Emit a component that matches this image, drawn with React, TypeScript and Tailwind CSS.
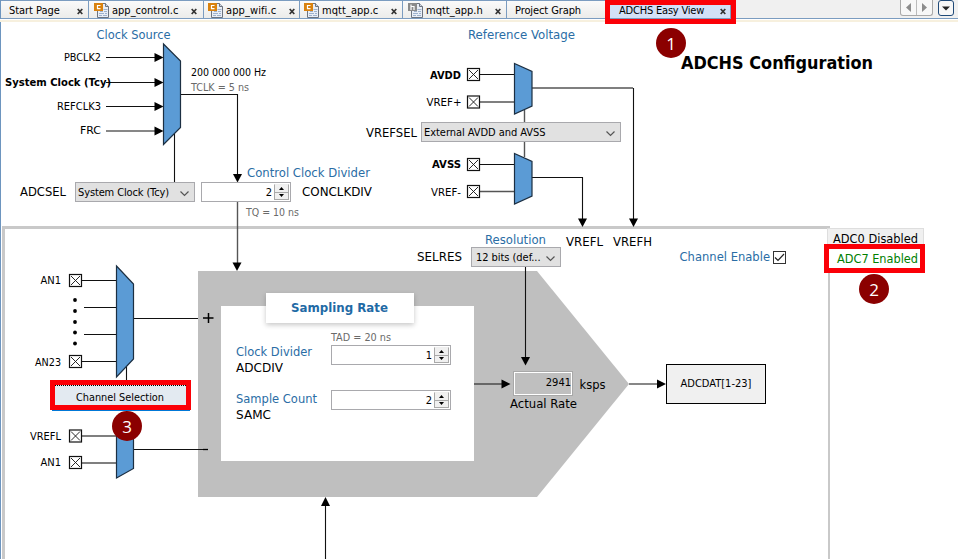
import React from "react";

interface LabelProps {
  x: number;
  y: number;
  w: number;
  children: string;
  tone?: string;
  size?: string;
}

const BLUE = "fill-[#2a6da5]";
const GREY = "fill-[#6a6a6a]";

/** Diagram caption: x is the left edge, y the baseline, w the run length. */
function Label({ x, y, w, children, tone = "fill-black", size = "text-[11px]" }: LabelProps) {
  return (
    <text x={x} y={y} textLength={w} lengthAdjust="spacingAndGlyphs" className={`${tone} ${size}`}>
      {children}
    </text>
  );
}

function Mux({ points }: { points: string }) {
  return <polygon points={points} fill="#5b9bd5" stroke="#1c2f42" strokeWidth="1.2" />;
}

/** Input pin: a crossed square. */
function Pin({ x, y }: { x: number; y: number }) {
  return (
    <g stroke="#111" fill="#fff">
      <rect x={x} y={y} width="12" height="12" strokeWidth="1.2" />
      <path d={`M${x + 1.5} ${y + 1.5}l9 9m0 -9l-9 9`} strokeWidth="0.9" />
    </g>
  );
}

type Dir = "right" | "down" | "up";

function Head({ x, y, dir }: { x: number; y: number; dir: Dir }) {
  const shape = {
    right: `M${x} ${y}l-9 -4.5v9z`,
    down: `M${x} ${y}l-4.5 -8.5h9z`,
    up: `M${x} ${y}l-4.5 9h9z`,
  }[dir];
  return <path d={shape} fill="#000" />;
}

function Wire({ d, soft = false }: { d: string; soft?: boolean }) {
  return <path d={d} fill="none" stroke={soft ? "#555" : "#111"} strokeWidth={soft ? 1.4 : 1.1} />;
}

function FileIcon({ kind }: { kind: "c" | "h" }) {
  const badge = kind === "c" ? "#d9820f" : "#8a8a8a";
  return (
    <svg width="16" height="16" viewBox="0 0 16 16" className="shrink-0">
      <path d="M3.5 1.5h8l3 3v11h-11z" fill="#e9eef6" stroke="#6c7480" />
      <path d="M11.5 1.5v3h3" fill="#cfd6e2" stroke="#6c7480" />
      <path d="M9.500 7.500h4M6 9.500h3m1 0h3M5 11.500h5m1 0h2M5 13.500h3m1 0h4" stroke="#9db1cc" />
      <rect x="0" y="1" width="9" height="8" fill={badge} />
      {kind === "c" ? (
        <path d="M6.500 3.500h-3v3.200h3" fill="none" stroke="#fff" strokeWidth="1.200" />
      ) : (
        <path d="M3 2.500v5.500M3 4.500h3v3.500" fill="none" stroke="#fff" strokeWidth="1.200" />
      )}
    </svg>
  );
}

function CloseMark() {
  return (
    <svg width="6" height="7" viewBox="0 0 6 7" className="mt-1 shrink-0">
      <path d="M0.700 1l4.600 5M5.300 1l-4.600 5" stroke="#333" strokeWidth="1.700" />
    </svg>
  );
}

interface TabProps {
  name: string;
  frame: string;
  text: string;
  icon?: "c" | "h";
  closable?: boolean;
  active?: boolean;
}

function Tab({ name, frame, text, icon, closable = true, active = false }: TabProps) {
  return (
    <div
      className={`flex h-[19px] shrink-0 items-center border-r border-t border-b border-[#7b9cc0] ${frame} ${
        active ? "bg-[#d3e0f7]" : "bg-gradient-to-b from-[#fafafa] to-[#ececea]"
      }`}
    >
      {icon && <FileIcon kind={icon} />}
      <span className={`mt-px whitespace-nowrap leading-none ${icon ? "ml-[2px]" : ""} ${text}`}>{name}</span>
      {closable && (
        <span className="ml-auto flex">
          <CloseMark />
        </span>
      )}
    </div>
  );
}

function TabBar() {
  return (
    <div className="flex h-[22px] items-start bg-[#f0f0f0] text-[11px]">
      <div className="flex h-[19px] min-w-0 flex-1 border-b border-[#7b9cc0] pl-px">
        <Tab name="Start Page" frame="w-[88px] pl-[8px] pr-[5px]" text="tracking-[-0.05px]" />
        <Tab name="app_control.c" frame="w-[115px] pl-[5px] pr-[6px]" text="tracking-[0px]" icon="c" />
        <Tab name="app_wifi.c" frame="w-[96px] pl-[4px] pr-[4px]" text="tracking-[0.1px]" icon="c" />
        <Tab name="mqtt_app.c" frame="w-[103px] pl-[4px] pr-[5px]" text="tracking-[0.05px]" icon="c" />
        <Tab name="mqtt_app.h" frame="w-[104px] pl-[5px] pr-[5px]" text="tracking-[0px]" icon="h" />
        <Tab name="Project Graph" frame="w-[103px] pl-[8px]" text="tracking-[-0.1px]" closable={false} />
        <Tab name="ADCHS Easy View" frame="w-[121px] pl-[9px] pr-[4px]" text="tracking-[-0.2px]" active />
        <div className="ml-auto flex h-4 gap-[5px] pr-[4px]">
          <div className="flex h-4 w-[33px] rounded-b-[3px] border border-t-0 border-[#a9a9a9] bg-[#f7f7f7]">
            <div className="flex flex-1 items-center justify-center border-r border-[#bbb]">
              <svg width="5" height="9" viewBox="0 0 5 9"><path d="M5 0v9L0 4.500z" fill="#8c8c8c" /></svg>
            </div>
            <div className="flex flex-1 items-center justify-center">
              <svg width="5" height="9" viewBox="0 0 5 9"><path d="M0 0v9l5-4.500z" fill="#8c8c8c" /></svg>
            </div>
          </div>
          <div className="flex h-4 w-4 items-center justify-center rounded-[3px] border border-[#204a78] bg-[#f7f7f7]">
            <svg width="8" height="5" viewBox="0 0 8 5"><path d="M0 0.500h8L4 4.500z" fill="#222" /></svg>
          </div>
        </div>
      </div>
    </div>
  );
}

function Select({ place, value, text }: { place: string; value: string; text: string }) {
  return (
    <div className={`absolute flex h-5 items-center justify-between border border-[#a9a9ad] bg-[#e1e1e1] pr-[5px] text-[11px] ${place}`}>
      <span className={`whitespace-nowrap leading-none ${text}`}>{value}</span>
      <svg width="9" height="6" viewBox="0 0 9 6" className="mt-[3px] shrink-0">
        <path d="M0.500 0.500l4 4 4-4" fill="none" stroke="#555" strokeWidth="1.200" />
      </svg>
    </div>
  );
}

function Spinner({ place, value }: { place: string; value: string }) {
  return (
    <div className={`absolute flex h-5 items-center justify-end border border-[#a9a9ad] bg-white pr-px text-[11px] ${place}`}>
      <span className="mr-[2px] leading-none">{value}</span>
      <div className="flex h-4 w-[15px] flex-col">
        <div className="flex flex-1 items-center justify-center border border-t-[#eee] border-[#a9a9a9] bg-[#f0f0f0]">
          <svg width="5" height="3" viewBox="0 0 5 3"><path d="M0 3h5L2.500 0z" /></svg>
        </div>
        <div className="flex flex-1 items-center justify-center border border-t-0 border-[#a9a9a9] bg-[#f0f0f0]">
          <svg width="5" height="3" viewBox="0 0 5 3"><path d="M0 0h5L2.500 3z" /></svg>
        </div>
      </div>
    </div>
  );
}

function Step({ place, n }: { place: string; n: string }) {
  return (
    <div className={`absolute flex h-[30px] w-[30px] items-center justify-center rounded-full bg-[#8b0000] font-['Open_Sans',sans-serif] text-[17px] leading-none text-white [font-stretch:normal] ${place}`}>
      {n}
    </div>
  );
}

function Schematic() {
  return (
    <svg width="958" height="559" viewBox="0 0 958 559" className="absolute left-0 top-0">
      {/* ADC core */}
      <polygon points="198,271 537,271 629,384 537,497 198,497" fill="#bfbfbf" />
      <rect x="221" y="306" width="253" height="155" fill="#fff" />

      {/* clock source */}
      {[57.5, 82.5, 106.5, 131].map((y) => (
        <g key={y}>
          <Wire d={`M106 ${y}H156`} />
          <Head x={163.5} y={y} dir="right" />
        </g>
      ))}
      <Wire d="M174.500 134V183" />
      <Mux points="163.5,44 180.5,61 180.5,127.5 163.5,144.5" />
      <Wire d="M181 94.500H237.500V176" />
      <Head x={237.5} y={182.5} dir="down" />
      <Wire d="M237.500 202V264" soft />
      <Head x={237} y={271} dir="down" />

      {/* reference voltage */}
      <Wire d="M480 74.500H514M480 164.500H514" />
      <Wire d="M480 102H514M480 191.500H514M524.500 110V157M532 88H633" soft />
      <Wire d="M633.500 88V220M532 177.500H582.500V220" />
      <Head x={582.5} y={227} dir="down" />
      <Head x={633.5} y={227} dir="down" />
      <Mux points="514.5,63.5 532,71.5 532,106 514.5,114" />
      <Mux points="514.5,153.500 532,161.500 532,196 514.5,204" />
      <Pin x={467.5} y={68.5} />
      <Pin x={467.5} y={96} />
      <Pin x={467.5} y={158.5} />
      <Pin x={467.5} y={185.5} />

      {/* positive and negative inputs */}
      <Wire d="M82 280.500H116M84 307.500H116M84 334.500H116M82 361.500H116M134 318.500H198M126.500 366V382M126.500 408V420M134 449.500H203" />
      <Wire d="M82 436H116M82 463H116" soft />
      <Mux points="116.5,266 133.5,284 133.5,359 116.5,377" />
      <Mux points="116.5,427 133.5,427 133.5,468.500 116.5,478" />
      <Pin x={69.5} y={274.5} />
      <Pin x={69.5} y={355.5} />
      <Pin x={69.5} y={430} />
      <Pin x={69.5} y={456.5} />
      {[300, 311, 322, 332.5, 343.5].map((y) => (
        <circle key={y} cx="75" cy={y} r="1.900" />
      ))}
      <path d="M203 318H213.500M208.500 313V323" stroke="#000" strokeWidth="1.500" />
      <path d="M203 449.500H208" stroke="#000" strokeWidth="1.300" />

      {/* core wiring */}
      <Wire d="M474 384H503M525.500 267V358M629 384H658M325.500 559V504" />
      <Head x={510.5} y={384} dir="right" />
      <Head x={525.5} y={365.5} dir="down" />
      <Head x={666} y={384} dir="right" />
      <Head x={325.5} y={497} dir="up" />

      <Label x={96.5} y={39} w={74} tone={BLUE} size="text-[12.5px]">Clock Source</Label>
      <Label x={64} y={61} w={37}>PBCLK2</Label>
      <Label x={5} y={86} w={106} size="text-[11px] font-bold">System Clock (Tcy)</Label>
      <Label x={57} y={110} w={44}>REFCLK3</Label>
      <Label x={80} y={134} w={21}>FRC</Label>
      <Label x={191} y={76} w={75}>200 000 000 Hz</Label>
      <Label x={191} y={91} w={58} tone={GREY}>TCLK = 5 ns</Label>
      <Label x={20} y={196} w={46} size="text-[12px]">ADCSEL</Label>
      <Label x={302} y={196} w={70} size="text-[12px]">CONCLKDIV</Label>
      <Label x={247} y={177} w={123} tone={BLUE} size="text-[12.5px]">Control Clock Divider</Label>
      <Label x={246} y={216} w={53} tone={GREY}>TQ = 10 ns</Label>

      <Label x={468} y={39} w={107} tone={BLUE} size="text-[12.5px]">Reference Voltage</Label>
      <Label x={430} y={79} w={31} size="text-[11px] font-bold">AVDD</Label>
      <Label x={426.5} y={106} w={35}>VREF+</Label>
      <Label x={366} y={137} w={51} size="text-[12px]">VREFSEL</Label>
      <Label x={432} y={168} w={29} size="text-[11px] font-bold">AVSS</Label>
      <Label x={431} y={196} w={30}>VREF-</Label>
      <Label x={681} y={69} w={192} size="text-[17px] font-bold">ADCHS Configuration</Label>

      <Label x={485} y={244} w={61} tone={BLUE} size="text-[12px]">Resolution</Label>
      <Label x={417} y={261} w={45} size="text-[12px]">SELRES</Label>
      <Label x={566} y={246} w={37} size="text-[12px]">VREFL</Label>
      <Label x={613} y={246} w={39} size="text-[12px]">VREFH</Label>
      <Label x={679.5} y={261} w={90.5} tone={BLUE} size="text-[12.500px]">Channel Enable</Label>

      <Label x={40.5} y={284} w={20.5}>AN1</Label>
      <Label x={35} y={366} w={26}>AN23</Label>
      <Label x={30} y={440} w={31}>VREFL</Label>
      <Label x={40.5} y={466} w={20.5}>AN1</Label>

      <Label x={331} y={341} w={60} tone={GREY}>TAD = 20 ns</Label>
      <Label x={236} y={356} w={76} tone={BLUE} size="text-[12.500px]">Clock Divider</Label>
      <Label x={236} y={372} w={47} size="text-[12px]">ADCDIV</Label>
      <Label x={236} y={403} w={81} tone={BLUE} size="text-[12.500px]">Sample Count</Label>
      <Label x={236} y={419} w={35} size="text-[12px]">SAMC</Label>
      <Label x={579.5} y={389} w={26} size="text-[12px]">ksps</Label>
      <Label x={510} y={408} w={67} size="text-[12px]">Actual Rate</Label>
    </svg>
  );
}

export default function App() {
  return (
    <div className="relative h-[559px] w-[958px] overflow-hidden bg-white font-['DejaVu_Sans_Condensed','DejaVu_Sans',sans-serif] text-black [font-stretch:condensed]">
      <TabBar />
      <div className="absolute left-0 top-0 h-full w-px bg-[#6d95bf]" />
      <div className="absolute left-0 top-[19px] h-[3px] w-full border-b-2 border-[#f7f0de] bg-white" />
      <div className="absolute left-[2px] top-[226px] h-[340px] w-[828px] border-[3px] border-r-2 border-[#c9c9c9]" />
      <Schematic />

      <Select place="left-[75px] top-[182px] w-[120px] pl-[2px]" value="System Clock (Tcy)" text="tracking-[-0.13px]" />
      <Spinner place="left-[201px] top-[182px] w-[90px]" value="2" />
      <Select place="left-[421px] top-[122px] w-[200px] pl-[2px]" value="External AVDD and AVSS" text="tracking-[-0.05px]" />
      <Select place="left-[471px] top-[247px] w-[90px] pl-[4px]" value="12 bits (def..." text="tracking-[-0.05px]" />

      <div className="absolute left-[773px] top-[251px] flex h-[13px] w-[13px] items-center justify-center border border-[#333] bg-white">
        <svg width="11" height="9" viewBox="0 0 11 9"><path d="M1 4.500l3 3L10 1" fill="none" stroke="#222" strokeWidth="1.200" /></svg>
      </div>

      <div className="absolute left-[266px] top-[293px] flex h-[30px] w-[148px] items-center justify-center bg-white shadow-[0_2px_5px_rgba(0,0,0,0.22)]">
        <svg width="98" height="18">
          <Label x={0} y={13} w={97} tone="fill-[#1f6aa5]" size="text-[12.500px] font-bold">Sampling Rate</Label>
        </svg>
      </div>
      <Spinner place="left-[331px] top-[345px] w-[120px]" value="1" />
      <Spinner place="left-[331px] top-[390px] w-[120px]" value="2" />

      <div className="absolute left-[513px] top-[371px] flex h-[25px] w-[60px] border border-[#a8a8a8]">
        <div className="flex flex-1 items-center justify-end border border-white bg-[#bfbfbf] text-[11px]">2941</div>
      </div>
      <div className="absolute left-[666px] top-[364px] flex h-10 w-[100px] items-center justify-center border border-black bg-[#f0f0f0] text-[11px]">
        ADCDAT[1-23]
      </div>

      <div className="absolute left-[827px] top-[228px] h-[18px] w-[97px] border border-[#dedede] bg-[#f0f0f0]" />
      <div className="absolute left-[824px] top-[244px] h-[29px] w-[101px] border-[5px] border-[#fb0007] bg-white" />
      <svg width="100" height="46" className="absolute left-[828px] top-[228px]">
        <Label x={5} y={15} w={85} size="text-[12px]">ADC0 Disabled</Label>
        <Label x={9} y={35} w={81} tone="fill-[#008000]" size="text-[12px]">ADC7 Enabled</Label>
      </svg>

      <div className="absolute left-[52px] top-[409px] h-[2px] w-[138px] bg-[#0078d7]" />
      <div className="absolute left-[50px] top-[380px] flex h-[30px] w-[141px] items-center justify-center border-[5px] border-[#fb0007] bg-[#e3eaf1]">
        <div className="flex h-full w-full items-center justify-center border-t border-dotted border-black text-[11px]">
          <svg width="90" height="16">
            <Label x={0} y={13} w={88}>Channel Selection</Label>
          </svg>
        </div>
      </div>

      <div className="absolute left-[605px] top-0 h-6 w-[131px] border-[5px] border-[#fb0007]" />
      <Step place="left-[656px] top-[28px]" n="1" />
      <Step place="left-[859px] top-[274px]" n="2" />
      <Step place="left-[112px] top-[411px]" n="3" />
    </div>
  );
}
